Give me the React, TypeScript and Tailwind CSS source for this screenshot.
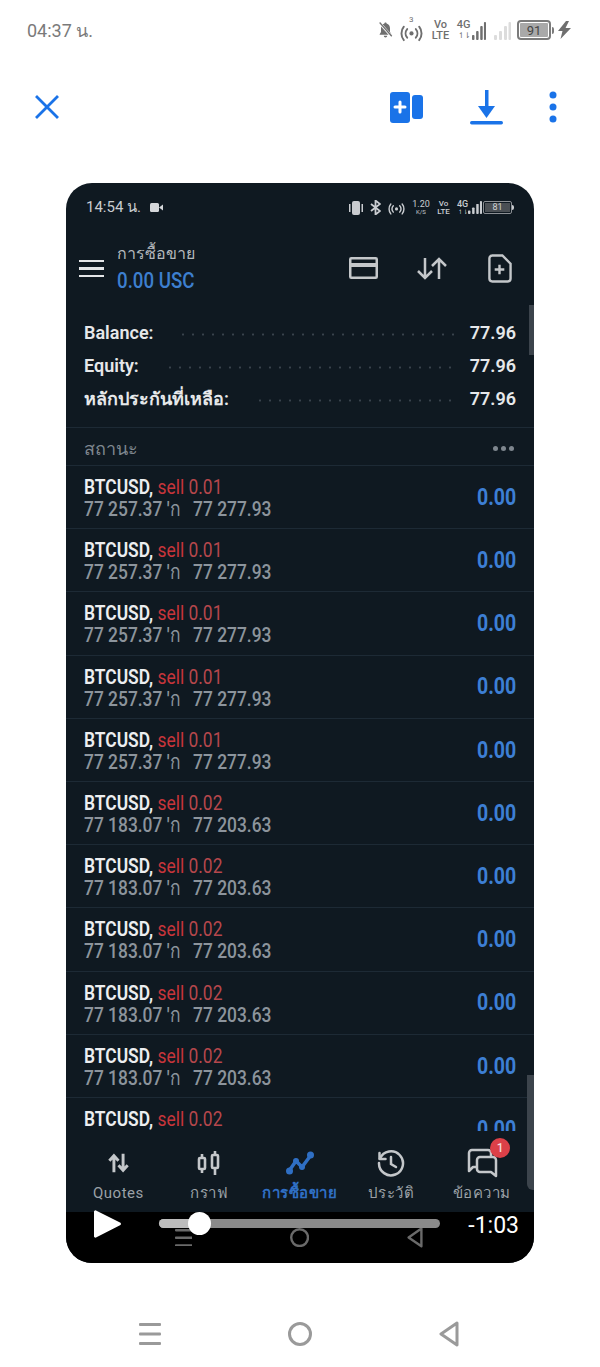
import React from "react";

const positions = [
  { lot: "0.01", open: "77 257.37", close: "77 277.93" },
  { lot: "0.01", open: "77 257.37", close: "77 277.93" },
  { lot: "0.01", open: "77 257.37", close: "77 277.93" },
  { lot: "0.01", open: "77 257.37", close: "77 277.93" },
  { lot: "0.01", open: "77 257.37", close: "77 277.93" },
  { lot: "0.02", open: "77 183.07", close: "77 203.63" },
  { lot: "0.02", open: "77 183.07", close: "77 203.63" },
  { lot: "0.02", open: "77 183.07", close: "77 203.63" },
  { lot: "0.02", open: "77 183.07", close: "77 203.63" },
  { lot: "0.02", open: "77 183.07", close: "77 203.63" },
  { lot: "0.02" },
];

const font = "font-['Roboto','Noto_Sans','Noto_Sans_CJK_SC',sans-serif]";

const SignalBars = ({ color, h = 18, w = 14 }: { color: string; h?: number; w?: number }) => (
  <svg width={w} height={h} viewBox="0 0 17 18" preserveAspectRatio="none" fill={color}>
    <rect x="0" y="13" width="3" height="5" rx="1" />
    <rect x="5" y="9" width="3" height="9" rx="1" />
    <rect x="10" y="4" width="3" height="14" rx="1" />
    <rect x="14.500" y="0" width="2.500" height="18" rx="1" />
  </svg>
);

const Broadcast = ({ color, size = 24 }: { color: string; size?: number }) => (
  <svg width={size} height={size} viewBox="0 0 24 24" fill="none" stroke={color} strokeWidth="2" strokeLinecap="round">
    <circle cx="12" cy="14" r="2.200" fill={color} stroke="none" />
    <path d="M7.500 9.500c-2.200 2.600-2.200 6.400 0 9M16.500 9.500c2.200 2.600 2.200 6.400 0 9" />
    <path d="M4 7C.7 11 .7 17 4 21M20 7c3.300 4 3.300 10 0 14" />
  </svg>
);

const TopStatus = () => (
  <div className={`flex h-[60px] items-center justify-between pl-[27px] pr-[28px] ${font}`}>
    <span className="text-[18px] text-[#7a7a7a]">04:37 น.</span>
    <div className="flex items-center text-[#6f6f6f]">
      <svg width="15" height="20" viewBox="0 0 18 20" fill="#6f6f6f">
        <path d="M9 1c-.8 0-1.300.5-1.300 1.200C5 3 3.600 5.200 3.600 8v4.500L2 15v.8h14V15l-1.600-2.500V8c0-2.800-1.400-5-4.100-5.800C10.300 1.500 9.800 1 9 1zM7 17h4c0 1.200-.9 2-2 2s-2-.8-2-2z" />
        <path d="M2 1.500 16.500 18" stroke="#fff" strokeWidth="3" />
        <path d="M2 1 16.500 17.500" stroke="#6f6f6f" strokeWidth="1.500" />
      </svg>
      <div className="relative ml-[7px] h-[26px] w-[23px]">
        <span className="absolute left-[9px] top-[-3px] text-[8px]">3</span>
        <div className="absolute bottom-0 left-0"><Broadcast color="#6f6f6f" size={23} /></div>
      </div>
      <div className="ml-[9px] flex w-[17px] flex-col items-center text-[11px] font-medium leading-[11px]">
        <span>Vo</span>
        <span>LTE</span>
      </div>
      <div className="ml-[7px] flex w-[15px] flex-col items-center text-[11px] font-medium leading-[11px]">
        <span>4G</span>
        <span className="text-[8px] tracking-[-1px]">↿⇂</span>
      </div>
      <div className="ml-[1px] mt-[2px]"><SignalBars color="#6f6f6f" /></div>
      <div className="ml-[8px] mt-[2px]"><SignalBars color="#dcdcdc" w={17} /></div>
      <div className="ml-[6px] flex h-[20px] w-[34px] items-center rounded-[4px] border-2 border-[#7b7b7b] p-[1px]">
        <div className="flex h-full flex-1 items-center justify-center rounded-[1px] bg-[#a9a9a9] text-[13px] leading-none text-[#444]">91</div>
      </div>
      <div className="ml-[1px] h-[7px] w-[2px] rounded-r bg-[#7b7b7b]" />
      <svg className="ml-[3px]" width="15" height="18" viewBox="0 0 15 18" fill="#6f6f6f">
        <path d="M9 0 1 10h4.500L3.500 18 14 7H8.500L12 0z" />
      </svg>
    </div>
  </div>
);

const Toolbar = () => (
  <div className="flex h-[95px] items-center pb-[1px] pl-[35px] pr-[43px]">
    <svg width="24" height="24" viewBox="0 0 24 24" stroke="#1a73e8" strokeWidth="2.800" strokeLinecap="square">
      <path d="M2 2 22 22M22 2 2 22" />
    </svg>
    <div className="ml-auto flex items-center">
      <svg width="33" height="31" viewBox="0 0 33 31">
        <rect x="0" y="0" width="20" height="31" rx="3" fill="#1a73e8" />
        <rect x="22" y="3" width="11" height="24" rx="3" fill="#1a73e8" />
        <path d="M10 10v10M5 15h10" stroke="#fff" strokeWidth="3" strokeLinecap="round" />
      </svg>
      <svg className="ml-[47px]" width="33" height="35" viewBox="0 0 33 35" fill="#1a73e8">
        <rect x="15" y="0" width="3.500" height="20" />
        <path d="M8 16h17l-8.500 12z" />
        <rect x="0" y="31" width="33" height="3.500" rx="1.700" />
      </svg>
      <svg className="ml-[46px]" width="8" height="32" viewBox="0 0 8 32" fill="#1a73e8">
        <circle cx="4" cy="4" r="3.500" />
        <circle cx="4" cy="16" r="3.500" />
        <circle cx="4" cy="28" r="3.500" />
      </svg>
    </div>
  </div>
);

const VideoStatus = () => (
  <div className={`flex h-[49px] items-center justify-between pl-[20px] pr-[20px] text-[#c9ccd0] ${font}`}>
    <div className="flex items-center">
      <span className="text-[15px]">14:54 น.</span>
      <svg className="ml-[9px]" width="13" height="9" viewBox="0 0 13 9" fill="#d5d7da">
        <rect x="0" y="0" width="9" height="9" rx="1.500" />
        <path d="M9 4.500 13 1.500v6z" />
      </svg>
    </div>
    <div className="flex items-center">
      <svg width="16" height="14" viewBox="0 0 16 14" fill="#c9ccd0">
        <rect x="4" y="0" width="8" height="14" rx="2" />
        <rect x="1" y="3" width="1.500" height="8" />
        <rect x="13.500" y="3" width="1.500" height="8" />
      </svg>
      <svg className="ml-[6px]" width="11" height="15" viewBox="0 0 11 15" fill="none" stroke="#c9ccd0" strokeWidth="1.800">
        <path d="M1 4 10 11 5.500 14.500V.5L10 4 1 11" />
      </svg>
      <div className="ml-[7px]"><Broadcast color="#c9ccd0" size={17} /></div>
      <div className="ml-[7px] flex w-[18px] flex-col items-center text-[9px] leading-[8px]">
        <span>1.20</span>
        <span className="text-[6px]">K/S</span>
      </div>
      <div className="ml-[7px] flex w-[13px] flex-col items-center text-[8px] font-medium leading-[8px]">
        <span>Vo</span>
        <span>LTE</span>
      </div>
      <div className="ml-[7px] flex w-[11px] flex-col items-center text-[9px] font-medium leading-[8px]">
        <span>4G</span>
        <span className="text-[6px]">↿⇂</span>
      </div>
      <SignalBars color="#c9ccd0" h={13} />
      <div className="ml-[1px] flex h-[13px] w-[29px] items-center rounded-[2px] border border-[#8b8f94] p-[1px]">
        <div className="flex h-full flex-1 items-center justify-center bg-[#4a4f54] text-[9px] leading-none text-[#d0d2d5]">81</div>
      </div>
      <div className="h-[5px] w-[2px] rounded-r bg-[#c9ccd0]" />
    </div>
  </div>
);

const AppHeader = () => (
  <div className={`flex h-[73px] items-center pl-[13px] pr-[22px] ${font}`}>
    <div className="flex w-[25px] flex-col gap-[5px]">
      <div className="h-[2.500px] bg-[#e4e6e8]" />
      <div className="h-[2.500px] bg-[#e4e6e8]" />
      <div className="h-[2.500px] bg-[#e4e6e8]" />
    </div>
    <div className="ml-[13px] -mt-[1px] flex flex-col">
      <span className="text-[16px] leading-[26px] text-[#b4b8bc]">การซื้อขาย</span>
      <span className="origin-left scale-x-[0.85] text-[22px] font-medium leading-[28px] text-[#3d7fcf]">0.00 USC</span>
    </div>
    <div className="ml-auto flex items-center">
      <svg className="-mt-[1px]" width="29" height="22" viewBox="0 0 29 22" fill="none" stroke="#c4c7ca" strokeWidth="2.500">
        <rect x="1.250" y="1.250" width="26.500" height="19.500" rx="1" />
        <path d="M1.250 8h26.500" strokeWidth="4" />
      </svg>
      <svg className="-mt-[1px] ml-[39px]" width="30" height="23" viewBox="0 0 30 23" fill="none" stroke="#c4c7ca" strokeWidth="2.500">
        <path d="M8 1v20M1 14l7 7 7-7" />
        <path d="M22 22V2M15 9l7-7 7 7" />
      </svg>
      <svg className="ml-[40px]" width="25" height="29" viewBox="0 0 26 30" fill="none" stroke="#c4c7ca" strokeWidth="2.500">
        <path d="M5 1.500h11L24.500 10v15.500a3 3 0 0 1-3 3h-16a3 3 0 0 1-3-3v-21a3 3 0 0 1 3-3z" />
        <path d="M13 11v10M8 16h10" />
      </svg>
    </div>
  </div>
);

const BalanceRow = ({ label, gap }: { label: string; gap: string }) => (
  <div className="flex h-[33px] items-center pl-[18px] pr-[18px]">
    <span className="text-[18px] font-semibold text-[#e6e8ea]">{label}</span>
    <div className={`${gap} mr-[14px] mt-[4px] h-[3px] flex-1 bg-[radial-gradient(circle,#39434d_1px,transparent_1.200px)] bg-[length:10px_3px] bg-repeat-x`} />
    <span className="text-[18px] font-semibold text-[#e6e8ea]">77.96</span>
  </div>
);

const Position = ({ lot, open, close }: { lot: string; open?: string; close?: string }) => (
  <div className="flex h-[63.200px] shrink-0 items-center justify-between border-b border-[#1d2a35] pl-[18px] pr-[18px] pt-[2px]">
    <div className="flex h-[44px] flex-col">
      <div className="origin-left scale-x-[0.87] whitespace-nowrap text-[20px] leading-[22px]">
        <span className="font-semibold text-[#eceef0]">BTCUSD, </span>
        <span className="text-[#c8353b]">sell </span>
        <span className="text-[#b5474c]">{lot}</span>
      </div>
      {open && (
        <div className="origin-left scale-x-[0.87] whitespace-nowrap text-[20px] font-medium leading-[22px] text-[#8c949c]">
          {open} 'ก&nbsp;&nbsp; {close}
        </div>
      )}
    </div>
    <span className="origin-right scale-x-[0.85] text-[23px] font-bold text-[#3d7fd4]">0.00</span>
  </div>
);

const NavItem = ({ label, active, children }: { label: string; active?: boolean; children: React.ReactNode }) => (
  <div className="relative flex flex-col items-center">
    <div className="flex h-[36px] items-center">{children}</div>
    <span className={`mt-[2px] whitespace-nowrap text-[15px] leading-[20px] tracking-[0.5px] ${active ? "font-semibold text-[#2f6fc4]" : "text-[#9ba1a7]"}`}>{label}</span>
  </div>
);

const BottomNav = () => (
  <div className={`grid h-[81px] shrink-0 grid-cols-5 bg-[#0f1921] px-[7px] pt-[14px] ${font}`}>
    <NavItem label="Quotes">
      <svg width="23" height="22" viewBox="0 0 24 24" fill="none" stroke="#c4c7ca" strokeWidth="3.200">
        <path d="M7 22V4M2 9.500 7 4l5 5.500" />
        <path d="M17 2v18M12 14.500l5 5.500 5-5.500" />
      </svg>
    </NavItem>
    <NavItem label="กราฟ">
      <svg width="24" height="26" viewBox="0 0 24 26" fill="none" stroke="#c4c7ca" strokeWidth="2.600">
        <rect x="2" y="8" width="6" height="11" rx="1" />
        <path d="M5 4v4M5 19v4" />
        <rect x="15" y="5" width="6" height="13" rx="1" />
        <path d="M18 1v4M18 18v7" />
      </svg>
    </NavItem>
    <NavItem label="การซื้อขาย" active>
      <svg width="28" height="24" viewBox="0 0 28 24" fill="none" stroke="#2f6fc4" strokeWidth="3.500">
        <path d="M3 20 10 10l6 6L25 4" />
        <g fill="#2f6fc4" stroke="none">
          <circle cx="3.500" cy="20" r="3.500" />
          <circle cx="10" cy="10" r="3" />
          <circle cx="16" cy="16" r="3" />
          <circle cx="24.500" cy="4" r="3.500" />
        </g>
      </svg>
    </NavItem>
    <NavItem label="ประวัติ">
      <svg width="28" height="28" viewBox="0 0 28 28" fill="none" stroke="#c4c7ca" strokeWidth="2.500" strokeLinecap="round">
        <path d="M3 9.500A12 12 0 1 1 2 14" />
        <path d="M2.500 4v6h6" strokeLinejoin="round" />
        <path d="M14 8v7l5 3" />
      </svg>
    </NavItem>
    <NavItem label="ข้อความ">
      <svg width="32" height="30" viewBox="0 0 32 30" fill="none" stroke="#c4c7ca" strokeWidth="2.500" strokeLinejoin="round">
        <path d="M11 19H7l-4 4V5a3 3 0 0 1 3-3h16a3 3 0 0 1 3 3v4" />
        <path d="M14 9h13a3 3 0 0 1 3 3v16l-5-4H14a3 3 0 0 1-3-3v-9a3 3 0 0 1 3-3z" />
      </svg>
      <div className="absolute left-[54px] top-[-7px] flex h-[20px] w-[20px] items-center justify-center rounded-full bg-[#dc4048] text-[12px] font-medium text-[#f4d9da]">1</div>
    </NavItem>
  </div>
);

const NavGlyphs = ({ color, size, gap }: { color: string; size: number; gap: string }) => (
  <div className={`flex items-center ${gap}`}>
    <svg width={22 * size} height={22 * size} viewBox="0 0 22 22" fill={color}>
      <rect x="0" y="0" width="22" height="3" rx="1" />
      <rect x="0" y="9.500" width="22" height="3" rx="1" />
      <rect x="0" y="19" width="22" height="3" rx="1" />
    </svg>
    <svg width={24 * size} height={24 * size} viewBox="0 0 24 24" fill="none" stroke={color} strokeWidth="3">
      <circle cx="12" cy="12" r="10.500" />
    </svg>
    <svg width={20 * size} height={26 * size} viewBox="0 0 20 26" fill="none" stroke={color} strokeWidth="3" strokeLinejoin="round">
      <path d="M18 2 2 13l16 11z" />
    </svg>
  </div>
);

const VideoControls = () => (
  <div className="relative flex h-[51px] shrink-0 bg-black pl-[28px] pr-[15px] pt-[6px]">
    {/* phone nav of the recording, showing through under the slider */}
    <div className="absolute inset-x-0 bottom-[15px] flex justify-center pr-[2px]">
      <NavGlyphs color="#6a6a6a" size={0.8} gap="gap-[98px]" />
    </div>
    <svg className="relative -mt-[8px]" width="27" height="28" viewBox="0 0 27 28" fill="#fff">
      <path d="M2 0.500 26 12.500a1.500 1.500 0 0 1 0 2.800L2 27.500A1.400 1.400 0 0 1 0 26V2A1.400 1.400 0 0 1 2 .5z" />
    </svg>
    <div className="relative ml-[38px] mt-[0.500px] h-[9px] w-[281px] rounded-full bg-[#8a8a8a]">
      <div className="h-full w-[41px] rounded-l-full bg-[#bdbdbd]" />
      <div className="absolute left-[29px] top-[-7px] h-[23px] w-[23px] rounded-full bg-white" />
    </div>
    <span className={`relative -mt-[4px] ml-auto text-[23px] leading-[24px] text-white ${font}`}>-1:03</span>
  </div>
);

export default function App() {
  return (
    <div className="flex h-[1367px] w-[600px] flex-col overflow-hidden bg-white">
      <TopStatus />
      <Toolbar />
      <div className="relative mx-[66px] mt-[28px] flex h-[1080px] shrink-0 flex-col overflow-hidden rounded-[26px] bg-[#0f1921]">
        <VideoStatus />
        <AppHeader />
        <div className={`flex min-h-0 flex-1 flex-col overflow-hidden ${font}`}>
          <div className="flex h-[123px] shrink-0 flex-col justify-start border-b border-[#1d2a35] pt-[11px]">
            <BalanceRow label="Balance:" gap="ml-[25px]" />
            <BalanceRow label="Equity:" gap="ml-[26px]" />
            <BalanceRow label="หลักประกันที่เหลือ:" gap="ml-[26px]" />
          </div>
          <div className="flex h-[38px] shrink-0 items-center justify-between border-b border-[#1d2a35] pl-[18px] pr-[20px] pt-[3px]">
            <span className="text-[18px] text-[#7e868e]">สถานะ</span>
            <div className="flex gap-[3px]">
              <div className="h-[5px] w-[5px] rounded-full bg-[#7e868e]" />
              <div className="h-[5px] w-[5px] rounded-full bg-[#7e868e]" />
              <div className="h-[5px] w-[5px] rounded-full bg-[#7e868e]" />
            </div>
          </div>
          {positions.map((p, i) => (
            <Position key={i} lot={p.lot} open={p.open} close={p.close} />
          ))}
        </div>
        <BottomNav />
        <VideoControls />
        {/* overlay scroll handles */}
        <div className="absolute right-0 top-[122px] h-[50px] w-[5px] bg-[#3c444c]" />
        <div className="absolute right-0 top-[892px] h-[115px] w-[7px] rounded-bl-[6px] bg-[#3c444c]" />
      </div>
      <div className="flex flex-1 items-center justify-center pr-[2px] pt-[37px]">
        <NavGlyphs color="#9a9a9a" size={1} gap="gap-[127px]" />
      </div>
    </div>
  );
}
